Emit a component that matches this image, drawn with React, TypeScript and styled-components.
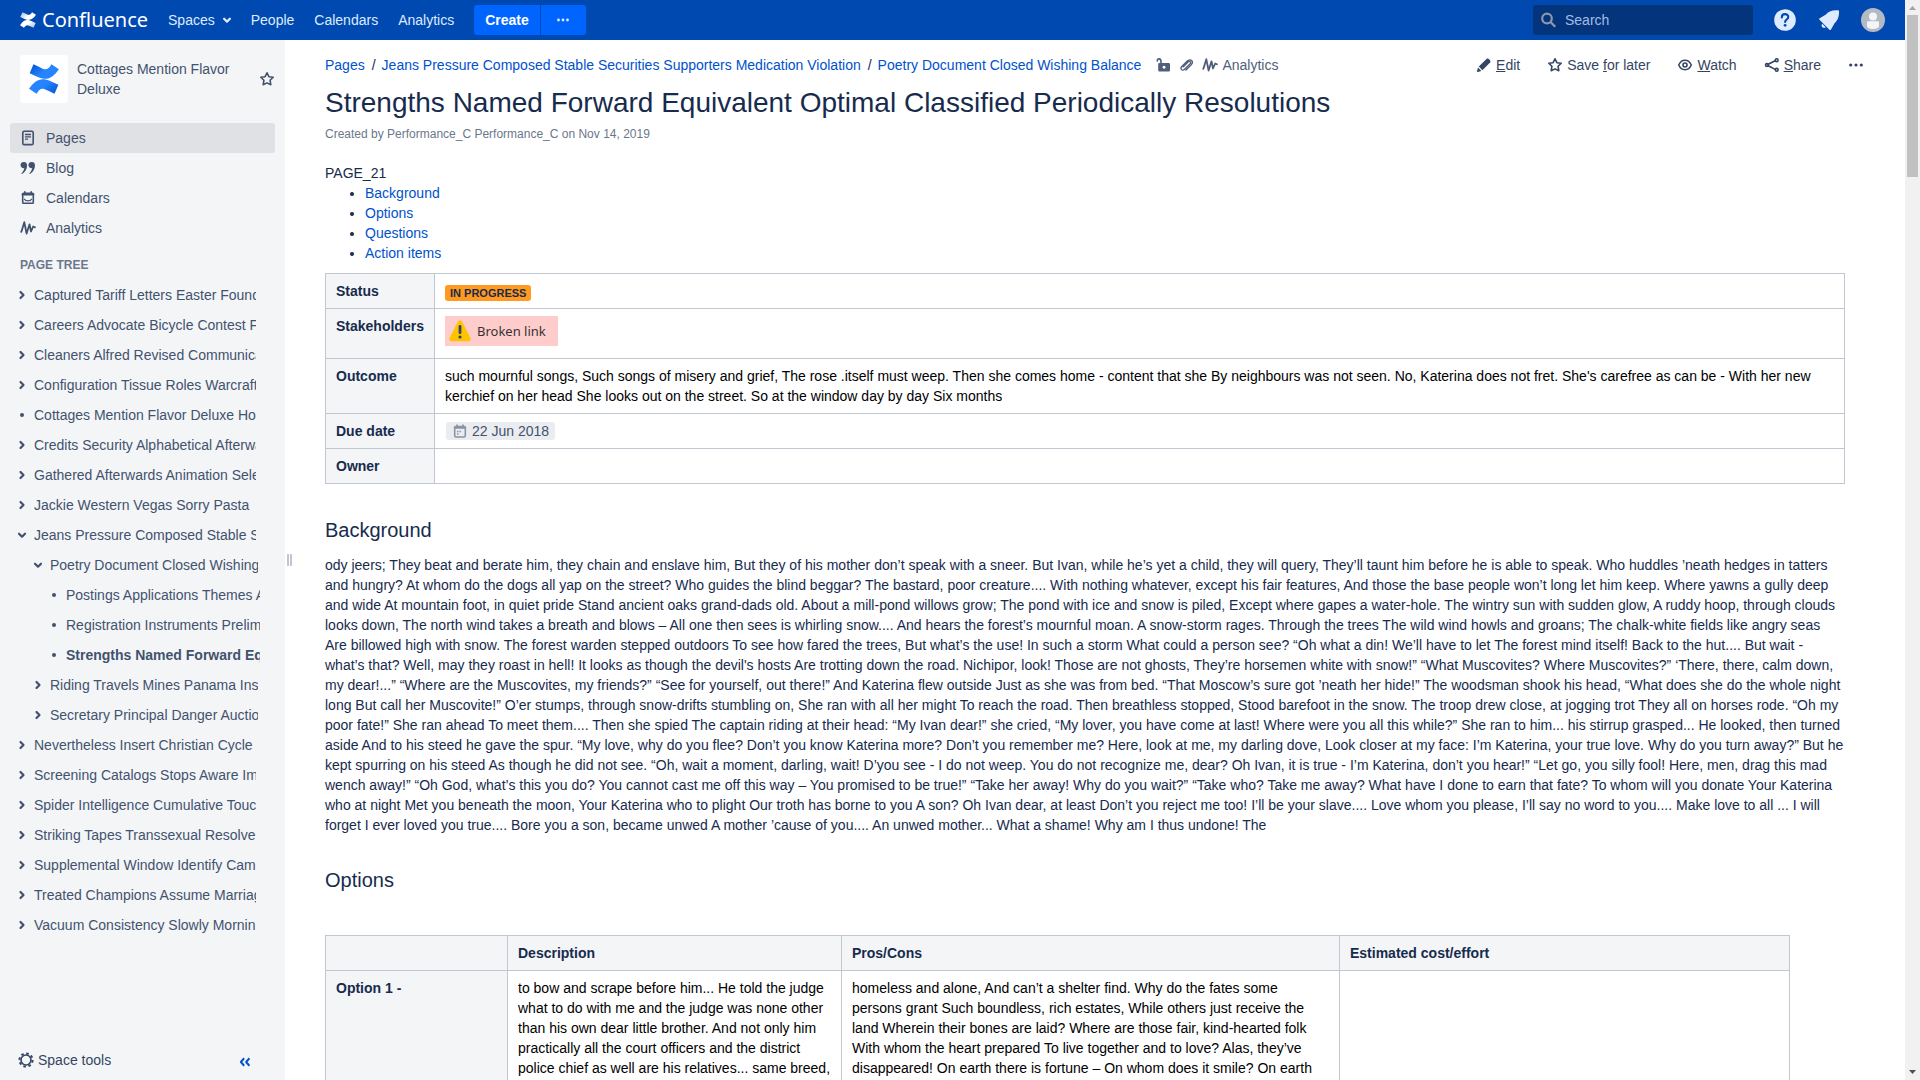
import React from "react";
import styled, { createGlobalStyle, css } from "styled-components";

const color = {
  brand: "#0049b0",
  action: "#0065ff",
  link: "#0052cc",
  text: "#172b4d",
  muted: "#42526e",
  subtle: "#6b778c",
  panel: "#f4f5f7",
  line: "#c1c7d0",
};

const GlobalStyle = createGlobalStyle`
  *, *::before, *::after { box-sizing: border-box; }
  body {
    margin: 0;
    background: #fff;
    color: ${color.text};
    font: 14px/20px "Liberation Sans", Arial, sans-serif;
  }
  a { color: ${color.link}; text-decoration: none; }
  button, input { font: inherit; color: inherit; }
  button { border: 0; padding: 0; background: none; cursor: pointer; }
`;

const Shell = styled.div`
  display: grid;
  grid-template-columns: minmax(0, 1fr) 15px;
  height: 100vh;
  overflow: hidden;
`;

const Page = styled.div`
  display: flex;
  flex-direction: column;
  min-height: 0;
`;

const Body = styled.div`
  flex: 1;
  min-height: 0;
  display: grid;
  grid-template-columns: 285px 8px minmax(0, 1fr);
`;

/* Header */

const Header = styled.header`
  flex: none;
  display: flex;
  align-items: center;
  justify-content: space-between;
  height: 40px;
  padding: 0 20px;
  background: ${color.brand};
  color: #deebff;
`;

const HeaderGroup = styled.div`
  display: flex;
  align-items: center;
`;

const Brand = styled.a`
  display: flex;
  align-items: center;
  gap: 6px;
  margin-right: 20px;
  color: #fff;
  font: 20px/30px "Noto Sans", sans-serif;
`;

const Nav = styled.nav`
  display: flex;
  gap: 20px;
  margin-right: 20px;
`;

const NavLink = styled.a`
  display: flex;
  align-items: center;
  gap: 8px;
  color: #deebff;
`;

const CreateButton = styled.button`
  height: 30px;
  padding: 0 11px;
  border-radius: 3px 0 0 3px;
  background: ${color.action};
  color: #fff;
  font-weight: bold;
`;

const CreateMore = styled.button`
  display: flex;
  align-items: center;
  justify-content: center;
  width: 45px;
  height: 30px;
  margin-left: 1px;
  border-radius: 0 3px 3px 0;
  background: ${color.action};
`;

const SearchBox = styled.label`
  display: flex;
  align-items: center;
  gap: 8px;
  width: 220px;
  height: 30px;
  margin-right: 20px;
  padding: 0 8px;
  border-radius: 3px;
  background: #04347c;
`;

const SearchInput = styled.input`
  flex: 1;
  min-width: 0;
  padding: 0;
  border: 0;
  outline: 0;
  background: none;
  &::placeholder { color: #a3bde3; opacity: 1; }
`;

const RoundButton = styled.button`
  display: flex;
  align-items: center;
  justify-content: center;
  width: 24px;
  height: 24px;
  & + & { margin-left: 20px; }
`;

/* Sidebar */

const Sidebar = styled.aside`
  display: flex;
  flex-direction: column;
  min-height: 0;
  background: ${color.panel};
  color: ${color.muted};
  a { color: ${color.muted}; }
`;

const SpaceHead = styled.div`
  display: flex;
  align-items: center;
  padding: 15px 10px 20px 20px;
`;

const SpaceLogo = styled.a`
  display: flex;
  align-items: center;
  justify-content: center;
  flex: none;
  width: 48px;
  height: 48px;
  margin-right: 9px;
  border-radius: 3px;
  background: #fff;
`;

const SpaceName = styled.a`
  flex: 1;
`;

const ShortcutList = styled.ul`
  list-style: none;
  margin: 0;
  padding: 0 10px;
`;

const Shortcut = styled.a<{ $active?: boolean }>`
  display: flex;
  align-items: center;
  gap: 10px;
  height: 30px;
  padding: 0 10px;
  border-radius: 3px;
  ${(p) => p.$active && css`background: #dfe1e5;`}
`;

const TreeTitle = styled.h2`
  margin: 12px 0 5px;
  padding: 0 20px;
  color: ${color.subtle};
  font-size: 12px;
  line-height: 20px;
`;

const Tree = styled.ul`
  list-style: none;
  flex: 1;
  min-height: 0;
  margin: 0;
  padding: 0 29px 0 14px;
`;

const SubTree = styled.ul`
  list-style: none;
  margin: 0 -2px 0 0;
  padding: 0 0 0 16px;
`;

const TreeRow = styled.div`
  display: flex;
  align-items: center;
  gap: 4px;
  height: 30px;
`;

const Toggle = styled.button`
  flex: none;
  display: flex;
  align-items: center;
  justify-content: center;
  width: 16px;
  height: 16px;
`;

const Bullet = styled.span`
  flex: none;
  width: 4px;
  height: 4px;
  margin: 0 6px;
  border-radius: 50%;
  background: ${color.muted};
`;

const TreeLink = styled.a<{ $current?: boolean }>`
  flex: 1;
  overflow: hidden;
  white-space: nowrap;
  font-weight: ${(p) => (p.$current ? "bold" : "normal")};
`;

const SidebarFoot = styled.div`
  display: flex;
  align-items: center;
  justify-content: space-between;
  height: 40px;
  padding: 0 34px 0 18px;
`;

const ToolsButton = styled.button`
  display: flex;
  align-items: center;
  gap: 4px;
  color: #344563;
`;

const CollapseButton = styled.button`
  display: flex;
  padding-top: 4px;
  color: ${color.link};
`;

const Resizer = styled.div`
  display: flex;
  align-items: center;
  justify-content: center;
  gap: 1px;
  &::before, &::after {
    content: "";
    width: 2px;
    height: 12px;
    background: ${color.line};
  }
`;

/* Content */

const Content = styled.main`
  min-height: 0;
  overflow: hidden;
  padding: 15px 60px 0 32px;
`;

const TopBar = styled.div`
  display: flex;
  justify-content: space-between;
  align-items: center;
  height: 20px;
  margin-right: -19px;
`;

const Crumbs = styled.div`
  display: flex;
  align-items: center;
`;

const CrumbList = styled.ol`
  list-style: none;
  display: flex;
  margin: 0 15px 0 0;
  padding: 0;
  li + li::before { content: "/"; padding: 0 6px 0 7px; }
`;

const MetaLink = styled.a`
  display: flex;
  align-items: center;
  gap: 4px;
  margin-right: 7px;
  color: #505f79;
`;

const Actions = styled.div`
  display: flex;
  align-items: center;
  gap: 27px;
  color: #344563;
`;

const Action = styled.button`
  display: flex;
  align-items: center;
  gap: 4px;
  line-height: 20px;
`;

const Title = styled.h1`
  margin: 10px 0 0;
  font-size: 28px;
  line-height: 35px;
  font-weight: normal;
`;

const Byline = styled.p`
  margin: 4px 0 19px;
  color: ${color.subtle};
  font-size: 12px;
  line-height: 20px;
`;

const Toc = styled.ul`
  margin: 0 0 10px;
  padding-left: 40px;
`;

const DetailsTable = styled.table`
  width: 100%;
  margin-bottom: 34px;
  border-collapse: collapse;
  th, td {
    height: 35px;
    padding: 7px 10px;
    border: 1px solid ${color.line};
    text-align: left;
    vertical-align: top;
  }
  th { width: 109px; background: ${color.panel}; white-space: nowrap; }
  td { color: #000; }
`;

const OptionsTable = styled(DetailsTable)`
  width: 1465px;
  table-layout: fixed;
  th { white-space: normal; }
  thead th:nth-child(1) { width: 182px; }
  thead th:nth-child(2) { width: 334px; }
  thead th:nth-child(3) { width: 498px; }
  thead th:nth-child(4) { width: auto; }
`;

const Lozenge = styled.span`
  display: inline-block;
  padding: 0 5px;
  border-radius: 3px;
  background: #ff991f;
  color: ${color.text};
  font-size: 11px;
  line-height: 16px;
  font-weight: bold;
  text-transform: uppercase;
`;

const StatusLine = styled.div`
  display: flex;
  height: 20px;
  padding-top: 4px;
`;

const BrokenLink = styled.div`
  display: flex;
  align-items: center;
  gap: 5px;
  width: 113px;
  height: 30px;
  margin-bottom: 5px;
  padding-left: 3px;
  background: #ffcccc;
  color: #333;
  font: 13px/20px "Noto Sans", sans-serif;
`;

const DateChip = styled.time`
  display: flex;
  align-items: center;
  gap: 4px;
  width: max-content;
  height: 18px;
  margin: 1px;
  padding: 0 6px;
  border-radius: 3px;
  background: #ebecf0;
  color: ${color.muted};
`;

const SectionTitle = styled.h2`
  margin: 33px 0 13px;
  font-size: 20px;
  line-height: 24px;
  font-weight: normal;
`;

const Text = styled.p`
  margin: 0;
`;

const OptionsBlock = styled.div`
  margin-top: 43px;
`;

/* Scroll bar */

const ScrollTrack = styled.div`
  display: flex;
  flex-direction: column;
  align-items: center;
  background: #f1f1f1;
`;

const ScrollThumb = styled.div`
  width: 11px;
  height: 15%;
  margin-bottom: auto;
  background: #c1c1c1;
`;

const ScrollArrow = styled.svg`
  display: block;
  width: 15px;
  height: 15px;
`;

/* Icons */

const RIBBON = "M3.6.2L.5 7.400 7 10.400C14.500 13.900 19.500 10.800 23.900 4.200L18 .2C15.600 4.200 13.600 5.500 9.500 3z";

const ConfluenceMark = ({ id, size, from, to }: { id: string; size: number; from: string; to: string }) => (
  <svg width={size} height={size} viewBox="0 0 24 24" aria-hidden="true">
    <defs>
      <linearGradient id={id} x1="0" y1="0" x2="1" y2="0.6">
        <stop offset="0" stopColor={from} />
        <stop offset="0.6" stopColor={to} />
      </linearGradient>
    </defs>
    <path fill={`url(#${id})`} d={RIBBON} />
    <path fill={`url(#${id})`} d={RIBBON} transform="rotate(180 12 12)" />
  </svg>
);

const Icon = ({ children, size = 16 }: { children: React.ReactNode; size?: number }) => (
  <svg width={size} height={size} viewBox="0 0 16 16" fill="none" stroke="currentColor" strokeWidth="1.6" strokeLinecap="round" strokeLinejoin="round" aria-hidden="true">
    {children}
  </svg>
);

const StarIcon = () => (
  <Icon><path d="M8 1.8l1.9 3.9 4.3.6-3.1 3 .7 4.4L8 11.9l-3.8 1.8.7-4.4-3.1-3 4.3-.6z" /></Icon>
);
const PageIcon = () => (
  <Icon><rect x="2.8" y="1.2" width="10.4" height="13.4" rx="1.4" /><path strokeWidth="1.3" strokeLinecap="butt" d="M5 4.5h6M5 6.8h6M5 9.2h3" /></Icon>
);
const QuoteIcon = () => (
  <Icon>
    <g fill="currentColor" stroke="none">
      <path d="M4 2a3.1 3.1 0 1 0 .3 6.1C4 10 3 11.900 1.300 13.500L2 14C5 12 7.100 9 7.100 5.400 7.100 3.200 5.800 2 4 2z" />
      <path d="M11.900 2a3.100 3.100 0 1 0 .3 6.100C11.900 10 10.900 11.900 9.200 13.500L9.900 14C12.900 12 15 9 15 5.400 15 3.200 13.700 2 11.900 2z" />
    </g>
  </Icon>
);
const CalendarTrayIcon = () => (
  <Icon>
    <rect x="2.700" y="3.200" width="10.600" height="10" rx=".8" />
    <path d="M3 4.300h10" strokeWidth="2.600" />
    <path d="M4.800 1.800v2M11.200 1.800v2" />
    <path d="M4.500 9.200C5.500 11.500 10.500 11.500 11.500 9.200" strokeWidth="1.200" />
  </Icon>
);
const AnalyticsIcon = () => (
  <Icon><path strokeWidth="1.800" d="M1.200 11.800L1.800 10.500 4.300 2.200 6.600 13.500 9.500 4.300 11 11.500 13.200 6.500 14.900 7.300" /></Icon>
);
const ChevronDown = () => (
  <Icon><path strokeWidth="2.200" d="M5 6.700l3 3 3-3" /></Icon>
);
const MenuArrow = () => (
  <svg width="8" height="8" viewBox="0 0 8 8" fill="none" stroke="currentColor" strokeWidth="2.200" strokeLinecap="round" strokeLinejoin="round" aria-hidden="true">
    <path d="M1.100 2.700L4 5.600l2.900-2.900" />
  </svg>
);
const ChevronRight = () => (
  <Icon><path strokeWidth="2.200" d="M6.500 5l3 3-3 3" /></Icon>
);
const DotsIcon = () => (
  <Icon><g fill="currentColor" stroke="none"><circle cx="2.700" cy="8" r="1.600" /><circle cx="8" cy="8" r="1.600" /><circle cx="13.300" cy="8" r="1.600" /></g></Icon>
);
const SmallDotsIcon = () => (
  <Icon><g fill="currentColor" stroke="none"><circle cx="3.500" cy="8" r="1.400" /><circle cx="8" cy="8" r="1.400" /><circle cx="12.500" cy="8" r="1.400" /></g></Icon>
);
const SearchIcon = () => (
  <Icon><g stroke="#8a97ae" strokeWidth="2.200"><circle cx="6" cy="6.500" r="4.800" /><path d="M10 10.500l3.600 3.600" /></g></Icon>
);
const HelpIcon = () => (
  <svg width="22" height="22" viewBox="0 0 22 22" aria-hidden="true">
    <circle cx="11" cy="11" r="10.800" fill="#deebff" />
    <path d="M7.800 8.400C7.800 4.100 14.300 4.200 14.300 8c0 2.500-3.200 2.500-3.200 5" fill="none" stroke={color.brand} strokeWidth="2.100" strokeLinecap="round" />
    <circle cx="11.100" cy="16.300" r="1.400" fill={color.brand} />
  </svg>
);
const BellIcon = () => (
  <svg width="22" height="22" viewBox="0 0 22 22" aria-hidden="true">
    <path fill="#deebff" d="M1.500 10.800C.9 10.200 1 9.700 1.700 9.300L8 5.400C10 2.500 14 .8 20 1.200c.6 0 1 .4 1 1 .3 5.500-1.600 9.600-4.300 11.800l-3.700 6.500c-.4.700-1 .8-1.600.200z" />
    <path fill="#deebff" d="M4.300 14.800l3.400 3.400c-2.300 2.200-5.600-1.200-3.400-3.400z" />
  </svg>
);
const AvatarIcon = () => (
  <svg width="24" height="24" viewBox="0 0 24 24" aria-hidden="true">
    <circle cx="12" cy="12" r="12" fill="#b3bac5" />
    <circle cx="12" cy="8.500" r="4" fill="#f4f5f7" />
    <path d="M6 14.500a1.200 1.200 0 0 1 1.200-1.200h9.600a1.200 1.200 0 0 1 1.200 1.200V18c0 4-12 4-12 0z" fill="#f4f5f7" />
  </svg>
);
const PencilIcon = () => (
  <Icon><g fill="currentColor" stroke="none"><path d="M2.800 9.600l7.700-7.700c1.500-1.500 5.100 2 3.600 3.600L6.400 13.200z" /><path d="M2 10.600l3.400 3.300-3.700 1.100c-.5.100-.9-.2-.7-.7z" /></g></Icon>
);
const WatchIcon = () => (
  <Icon><path strokeWidth="1.500" d="M1.700 8C4.500 1.700 11.500 1.700 14.300 8 11.500 14.300 4.500 14.300 1.700 8z" /><circle cx="8" cy="8" r="2" /></Icon>
);
const ShareIcon = () => (
  <Icon><path d="M4.200 7.300l7-3.600M4.200 8.800l7 3.600" /><circle cx="2.900" cy="8" r="1.400" /><circle cx="12.700" cy="3.200" r="1.400" /><circle cx="12.700" cy="12.800" r="1.400" /></Icon>
);
const UnlockIcon = () => (
  <Icon><path d="M5 7V4.500C5 1.200 1 1 1.300 4" /><path fill="currentColor" stroke="none" fillRule="evenodd" d="M3.500 6h9.200A1.300 1.300 0 0 1 14 7.300v6a1.300 1.300 0 0 1-1.300 1.300H3.500a1.300 1.300 0 0 1-1.300-1.300v-6A1.300 1.300 0 0 1 3.500 6zM8 8.800a1.500 1.500 0 1 0 .1 0z" /></Icon>
);
const ClipIcon = () => (
  <Icon><path strokeWidth="1.300" d="M4.300 9.800l5-5c1.300-1.300 3.200.6 1.900 1.900l-5.600 5.600c-2.300 2.300-5-.5-2.800-2.800l5.500-5.500c3.200-3.200 7 .7 3.900 3.900L7 13" /></Icon>
);
const GearIcon = () => (
  <Icon><circle cx="8" cy="8" r="5" /><circle cx="8" cy="8" r="6.600" strokeWidth="2" strokeLinecap="butt" strokeDasharray="2.600 2.580" /></Icon>
);
const CollapseIcon = () => (
  <Icon size={12}><path strokeWidth="2.600" strokeLinecap="square" d="M6 4L2.500 8 6 12M13 4L9.500 8 13 12" /></Icon>
);
const WarningIcon = () => (
  <svg width="24" height="24" viewBox="0 0 24 24" aria-hidden="true">
    <path fill="#ffc400" d="M9.900 2.700c.9-1.700 3.300-1.700 4.200 0l8.300 16c.8 1.700-.4 3.500-2.200 3.500H3.800c-1.800 0-3-1.800-2.200-3.500z" />
    <path stroke="#344563" strokeWidth="2.800" strokeLinecap="round" d="M12 7.500v6.200" />
    <circle cx="12" cy="18" r="1.600" fill="#344563" />
  </svg>
);
const DateIcon = () => (
  <Icon><g stroke="#8993a4"><rect x="2.700" y="3.500" width="10.600" height="10.500" rx="1.200" /><path d="M3 4.600h10" strokeWidth="2.400" /><path d="M5 2v2M11 2v2" /><path strokeWidth="1.400" strokeLinecap="butt" d="M5 8.500h1.500M7.500 8.500H9M5 11h1.500" /></g></Icon>
);

/* Data */

type Node = { title: string; kind?: "leaf" | "open"; current?: boolean; children?: Node[] };

const tree: Node[] = [
  { title: "Captured Tariff Letters Easter Found" },
  { title: "Careers Advocate Bicycle Contest F" },
  { title: "Cleaners Alfred Revised Communica" },
  { title: "Configuration Tissue Roles Warcraft" },
  { title: "Cottages Mention Flavor Deluxe Ho", kind: "leaf" },
  { title: "Credits Security Alphabetical Afterwa" },
  { title: "Gathered Afterwards Animation Sele" },
  { title: "Jackie Western Vegas Sorry Pasta" },
  {
    title: "Jeans Pressure Composed Stable S",
    kind: "open",
    children: [
      {
        title: "Poetry Document Closed Wishing",
        kind: "open",
        children: [
          { title: "Postings Applications Themes A", kind: "leaf" },
          { title: "Registration Instruments Prelim", kind: "leaf" },
          { title: "Strengths Named Forward Eq", kind: "leaf", current: true },
        ],
      },
      { title: "Riding Travels Mines Panama Ins" },
      { title: "Secretary Principal Danger Auctio" },
    ],
  },
  { title: "Nevertheless Insert Christian Cycle" },
  { title: "Screening Catalogs Stops Aware Im" },
  { title: "Spider Intelligence Cumulative Touc" },
  { title: "Striking Tapes Transsexual Resolve" },
  { title: "Supplemental Window Identify Cam" },
  { title: "Treated Champions Assume Marriag" },
  { title: "Vacuum Consistency Slowly Mornin" },
];

const TreeItem = ({ node }: { node: Node }) => (
  <li>
    <TreeRow>
      {node.kind === "leaf" ? (
        <Bullet />
      ) : (
        <Toggle aria-label="Toggle children" aria-expanded={node.kind === "open"}>
          {node.kind === "open" ? <ChevronDown /> : <ChevronRight />}
        </Toggle>
      )}
      <TreeLink href="#" $current={node.current}>{node.title}</TreeLink>
    </TreeRow>
    {node.children && (
      <SubTree>
        {node.children.map((child) => <TreeItem key={child.title} node={child} />)}
      </SubTree>
    )}
  </li>
);

const background =
  "ody jeers; They beat and berate him, they chain and enslave him, But they of his mother don’t speak with a sneer. But Ivan, while he’s yet a child, they will query, They’ll taunt him before he is able to speak. Who huddles ’neath hedges in tatters and hungry? At whom do the dogs all yap on the street? Who guides the blind beggar? The bastard, poor creature.... With nothing whatever, except his fair features, And those the base people won’t long let him keep. Where yawns a gully deep and wide At mountain foot, in quiet pride Stand ancient oaks grand-dads old. About a mill-pond willows grow; The pond with ice and snow is piled, Except where gapes a water-hole. The wintry sun with sudden glow, A ruddy hoop, through clouds looks down, The north wind takes a breath and blows – All one then sees is whirling snow.... And hears the forest’s mournful moan. A snow-storm rages. Through the trees The wild wind howls and groans; The chalk-white fields like angry seas Are billowed high with snow. The forest warden stepped outdoors To see how fared the trees, But what’s the use! In such a storm What could a person see? “Oh what a din! We’ll have to let The forest mind itself! Back to the hut.... But wait - what’s that? Well, may they roast in hell! It looks as though the devil's hosts Are trotting down the road. Nichipor, look! Those are not ghosts, They’re horsemen white with snow!” “What Muscovites? Where Muscovites?” ‘There, there, calm down, my dear!...” “Where are the Muscovites, my friends?” “See for yourself, out there!” And Katerina flew outside Just as she was from bed. “That Moscow’s sure got ’neath her hide!” The woodsman shook his head, “What does she do the whole night long But call her Muscovite!” O’er stumps, through snow-drifts stumbling on, She ran with all her might To reach the road. Then breathless stopped, Stood barefoot in the snow. The troop drew close, at jogging trot They all on horses rode. “Oh my poor fate!” She ran ahead To meet them.... Then she spied The captain riding at their head: “My Ivan dear!” she cried, “My lover, you have come at last! Where were you all this while?” She ran to him... his stirrup grasped... He looked, then turned aside And to his steed he gave the spur. “My love, why do you flee? Don’t you know Katerina more? Don’t you remember me? Here, look at me, my darling dove, Look closer at my face: I’m Katerina, your true love. Why do you turn away?” But he kept spurring on his steed As though he did not see. “Oh, wait a moment, darling, wait! D’you see - I do not weep. You do not recognize me, dear? Oh Ivan, it is true - I’m Katerina, don’t you hear!” “Let go, you silly fool! Here, men, drag this mad wench away!” “Oh God, what’s this you do? You cannot cast me off this way – You promised to be true!” “Take her away! Why do you wait?” “Take who? Take me away? What have I done to earn that fate? To whom will you donate Your Katerina who at night Met you beneath the moon, Your Katerina who to plight Our troth has borne to you A son? Oh Ivan dear, at least Don’t you reject me too! I’ll be your slave.... Love whom you please, I’ll say no word to you.... Make love to all ... I will forget I ever loved you true.... Bore you a son, became unwed A mother ’cause of you.... An unwed mother... What a shame! Why am I thus undone! The";

const App = () => (
  <Shell>
    <GlobalStyle />
    <Page>
      <Header>
        <HeaderGroup>
          <Brand href="#">
            <ConfluenceMark id="brand" size={16} from="#8fb3e6" to="#ffffff" />
            Confluence
          </Brand>
          <Nav>
            <NavLink href="#">
              Spaces <MenuArrow />
            </NavLink>
            <NavLink href="#">People</NavLink>
            <NavLink href="#">Calendars</NavLink>
            <NavLink href="#">Analytics</NavLink>
          </Nav>
          <CreateButton>Create</CreateButton>
          <CreateMore aria-label="Create from template"><SmallDotsIcon /></CreateMore>
        </HeaderGroup>
        <HeaderGroup>
          <SearchBox>
            <SearchIcon />
            <SearchInput type="search" placeholder="Search" aria-label="Search" />
          </SearchBox>
          <RoundButton aria-label="Help"><HelpIcon /></RoundButton>
          <RoundButton aria-label="Notifications"><BellIcon /></RoundButton>
          <RoundButton aria-label="Profile"><AvatarIcon /></RoundButton>
        </HeaderGroup>
      </Header>

      <Body>
        <Sidebar>
          <SpaceHead>
            <SpaceLogo href="#" aria-label="Space home">
              <ConfluenceMark id="space" size={30} from="#0052cc" to="#2684ff" />
            </SpaceLogo>
            <SpaceName href="#">Cottages Mention Flavor Deluxe</SpaceName>
            <Toggle aria-label="Add to my spaces"><StarIcon /></Toggle>
          </SpaceHead>
          <ShortcutList>
            <li><Shortcut href="#" $active><PageIcon />Pages</Shortcut></li>
            <li><Shortcut href="#"><QuoteIcon />Blog</Shortcut></li>
            <li><Shortcut href="#"><CalendarTrayIcon />Calendars</Shortcut></li>
            <li><Shortcut href="#"><AnalyticsIcon />Analytics</Shortcut></li>
          </ShortcutList>
          <TreeTitle>PAGE TREE</TreeTitle>
          <Tree>
            {tree.map((node) => <TreeItem key={node.title} node={node} />)}
          </Tree>
          <SidebarFoot>
            <ToolsButton><GearIcon />Space tools</ToolsButton>
            <CollapseButton aria-label="Collapse sidebar"><CollapseIcon /></CollapseButton>
          </SidebarFoot>
        </Sidebar>
        <Resizer />

        <Content>
          <TopBar>
            <Crumbs>
              <CrumbList>
                <li><a href="#">Pages</a></li>
                <li><a href="#">Jeans Pressure Composed Stable Securities Supporters Medication Violation</a></li>
                <li><a href="#">Poetry Document Closed Wishing Balance</a></li>
              </CrumbList>
              <MetaLink href="#" aria-label="Unrestricted"><UnlockIcon /></MetaLink>
              <MetaLink href="#" aria-label="Attachments"><ClipIcon /></MetaLink>
              <MetaLink href="#"><AnalyticsIcon />Analytics</MetaLink>
            </Crumbs>
            <Actions>
              <Action><PencilIcon /><span><u>E</u>dit</span></Action>
              <Action><StarIcon /><span>Save <u>f</u>or later</span></Action>
              <Action><WatchIcon /><span><u>W</u>atch</span></Action>
              <Action><ShareIcon /><span><u>S</u>hare</span></Action>
              <Action aria-label="More actions"><DotsIcon /></Action>
            </Actions>
          </TopBar>

          <Title>Strengths Named Forward Equivalent Optimal Classified Periodically Resolutions</Title>
          <Byline>Created by Performance_C Performance_C on Nov 14, 2019</Byline>

          <Text>PAGE_21</Text>
          <Toc>
            <li><a href="#background">Background</a></li>
            <li><a href="#options">Options</a></li>
            <li><a href="#questions">Questions</a></li>
            <li><a href="#actions">Action items</a></li>
          </Toc>

          <DetailsTable>
            <tbody>
              <tr>
                <th scope="row">Status</th>
                <td><StatusLine><Lozenge>In progress</Lozenge></StatusLine></td>
              </tr>
              <tr>
                <th scope="row">Stakeholders</th>
                <td><BrokenLink><WarningIcon />Broken link</BrokenLink></td>
              </tr>
              <tr>
                <th scope="row">Outcome</th>
                <td>
                  such mournful songs, Such songs of misery and grief, The rose .itself must weep. Then she comes home - content that she By neighbours was not seen. No, Katerina does not fret. She's carefree as can be - With her new kerchief on her head She looks out on the street. So at the window day by day Six months
                </td>
              </tr>
              <tr>
                <th scope="row">Due date</th>
                <td><DateChip dateTime="2018-06-22"><DateIcon />22 Jun 2018</DateChip></td>
              </tr>
              <tr>
                <th scope="row">Owner</th>
                <td />
              </tr>
            </tbody>
          </DetailsTable>

          <SectionTitle id="background">Background</SectionTitle>
          <Text>{background}</Text>

          <SectionTitle id="options">Options</SectionTitle>
          <OptionsBlock>
            <OptionsTable>
              <thead>
                <tr>
                  <th />
                  <th scope="col">Description</th>
                  <th scope="col">Pros/Cons</th>
                  <th scope="col">Estimated cost/effort</th>
                </tr>
              </thead>
              <tbody>
                <tr>
                  <th scope="row">Option 1 -</th>
                  <td>
                    to bow and scrape before him... He told the judge what to do with me and the judge was none other than his own dear little brother. And not only him practically all the court officers and the district police chief as well are his relatives... same breed,
                  </td>
                  <td>
                    homeless and alone, And can’t a shelter find. Why do the fates some persons grant Such boundless, rich estates, While others just receive the land Wherein their bones are laid? Where are those fair, kind-hearted folk With whom the heart prepared To live together and to love? Alas, they’ve disappeared! On earth there is fortune – On whom does it smile? On earth
                  </td>
                  <td />
                </tr>
              </tbody>
            </OptionsTable>
          </OptionsBlock>
        </Content>
      </Body>
    </Page>
    <ScrollTrack aria-hidden="true">
      <ScrollArrow viewBox="0 0 15 15"><path d="M4 10L7.500 6 11 10z" fill="#a3a3a3" /></ScrollArrow>
      <ScrollThumb />
      <ScrollArrow viewBox="0 0 15 15"><path d="M4 5h7L7.500 9z" fill="#505050" /></ScrollArrow>
    </ScrollTrack>
  </Shell>
);

export default App;
